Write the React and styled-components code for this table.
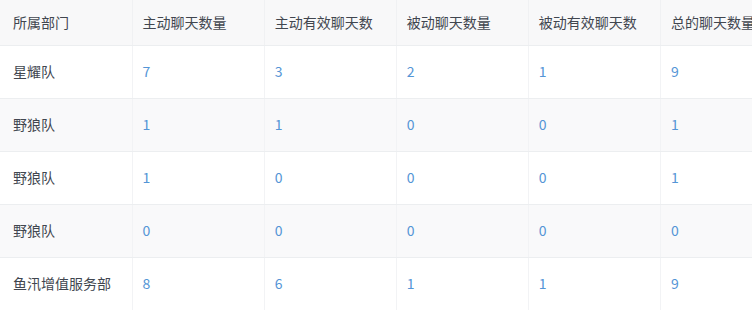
import React from "react";
import styled, { createGlobalStyle } from "styled-components";

const GlobalStyle = createGlobalStyle`
  html, body {
    margin: 0;
    padding: 0;
    background: #ffffff;
    overflow: hidden;
  }
  body {
    font-family: "Noto Sans CJK SC", "Noto Sans", sans-serif;
  }
`;

const columns = [
  "所属部门",
  "主动聊天数量",
  "主动有效聊天数",
  "被动聊天数量",
  "被动有效聊天数",
  "总的聊天数量",
];

const rows = [
  ["星耀队", 7, 3, 2, 1, 9],
  ["野狼队", 1, 1, 0, 0, 1],
  ["野狼队", 1, 0, 0, 0, 1],
  ["野狼队", 0, 0, 0, 0, 0],
  ["鱼汛增值服务部", 8, 6, 1, 1, 9],
];

function App() {
  return (
    <>
      <GlobalStyle />
      <Wrapper>
        <Table>
          <colgroup>
            {columns.map((c) => (
              <col key={c} width={132} />
            ))}
          </colgroup>
          <thead>
            <tr>
              {columns.map((c, i) => (
                <HeadCell key={c} $first={i === 0}>
                  {c}
                </HeadCell>
              ))}
            </tr>
          </thead>
          <tbody>
            {rows.map((r, ri) => (
              <Row key={ri} $striped={ri % 2 === 1}>
                {r.map((v, i) => (
                  <Cell key={i} $first={i === 0} $num={i > 0}>
                    {v}
                  </Cell>
                ))}
              </Row>
            ))}
          </tbody>
        </Table>
      </Wrapper>
    </>
  );
}

const Wrapper = styled.div`
  width: 752px;
  height: 310px;
  overflow: hidden;
`;

const Table = styled.table`
  border-collapse: collapse;
  table-layout: fixed;
  width: 793px;
  font-size: 14px;
`;

const HeadCell = styled.th`
  height: 43px;
  padding: 0 0 2px ${(p) => (p.$first ? "13px" : "10px")};
  text-align: left;
  font-weight: normal;
  color: #41464f;
  background: #f8f8f9;
  border-right: 1px solid #f0f1f3;
  border-bottom: 1px solid #eceef0;
  white-space: nowrap;
  overflow: hidden;
`;

const Row = styled.tr`
  background: ${(p) => (p.$striped ? "#f9f9fa" : "#ffffff")};
`;

const Cell = styled.td`
  height: 50px;
  padding: 0 0 2px ${(p) => (p.$first ? "13px" : "10px")};
  color: ${(p) => (p.$num ? "#5495d6" : "#41464f")};
  border-right: 1px solid #f2f3f5;
  border-bottom: 1px solid #eceef0;
  white-space: nowrap;
  overflow: hidden;
`;

export default App;
